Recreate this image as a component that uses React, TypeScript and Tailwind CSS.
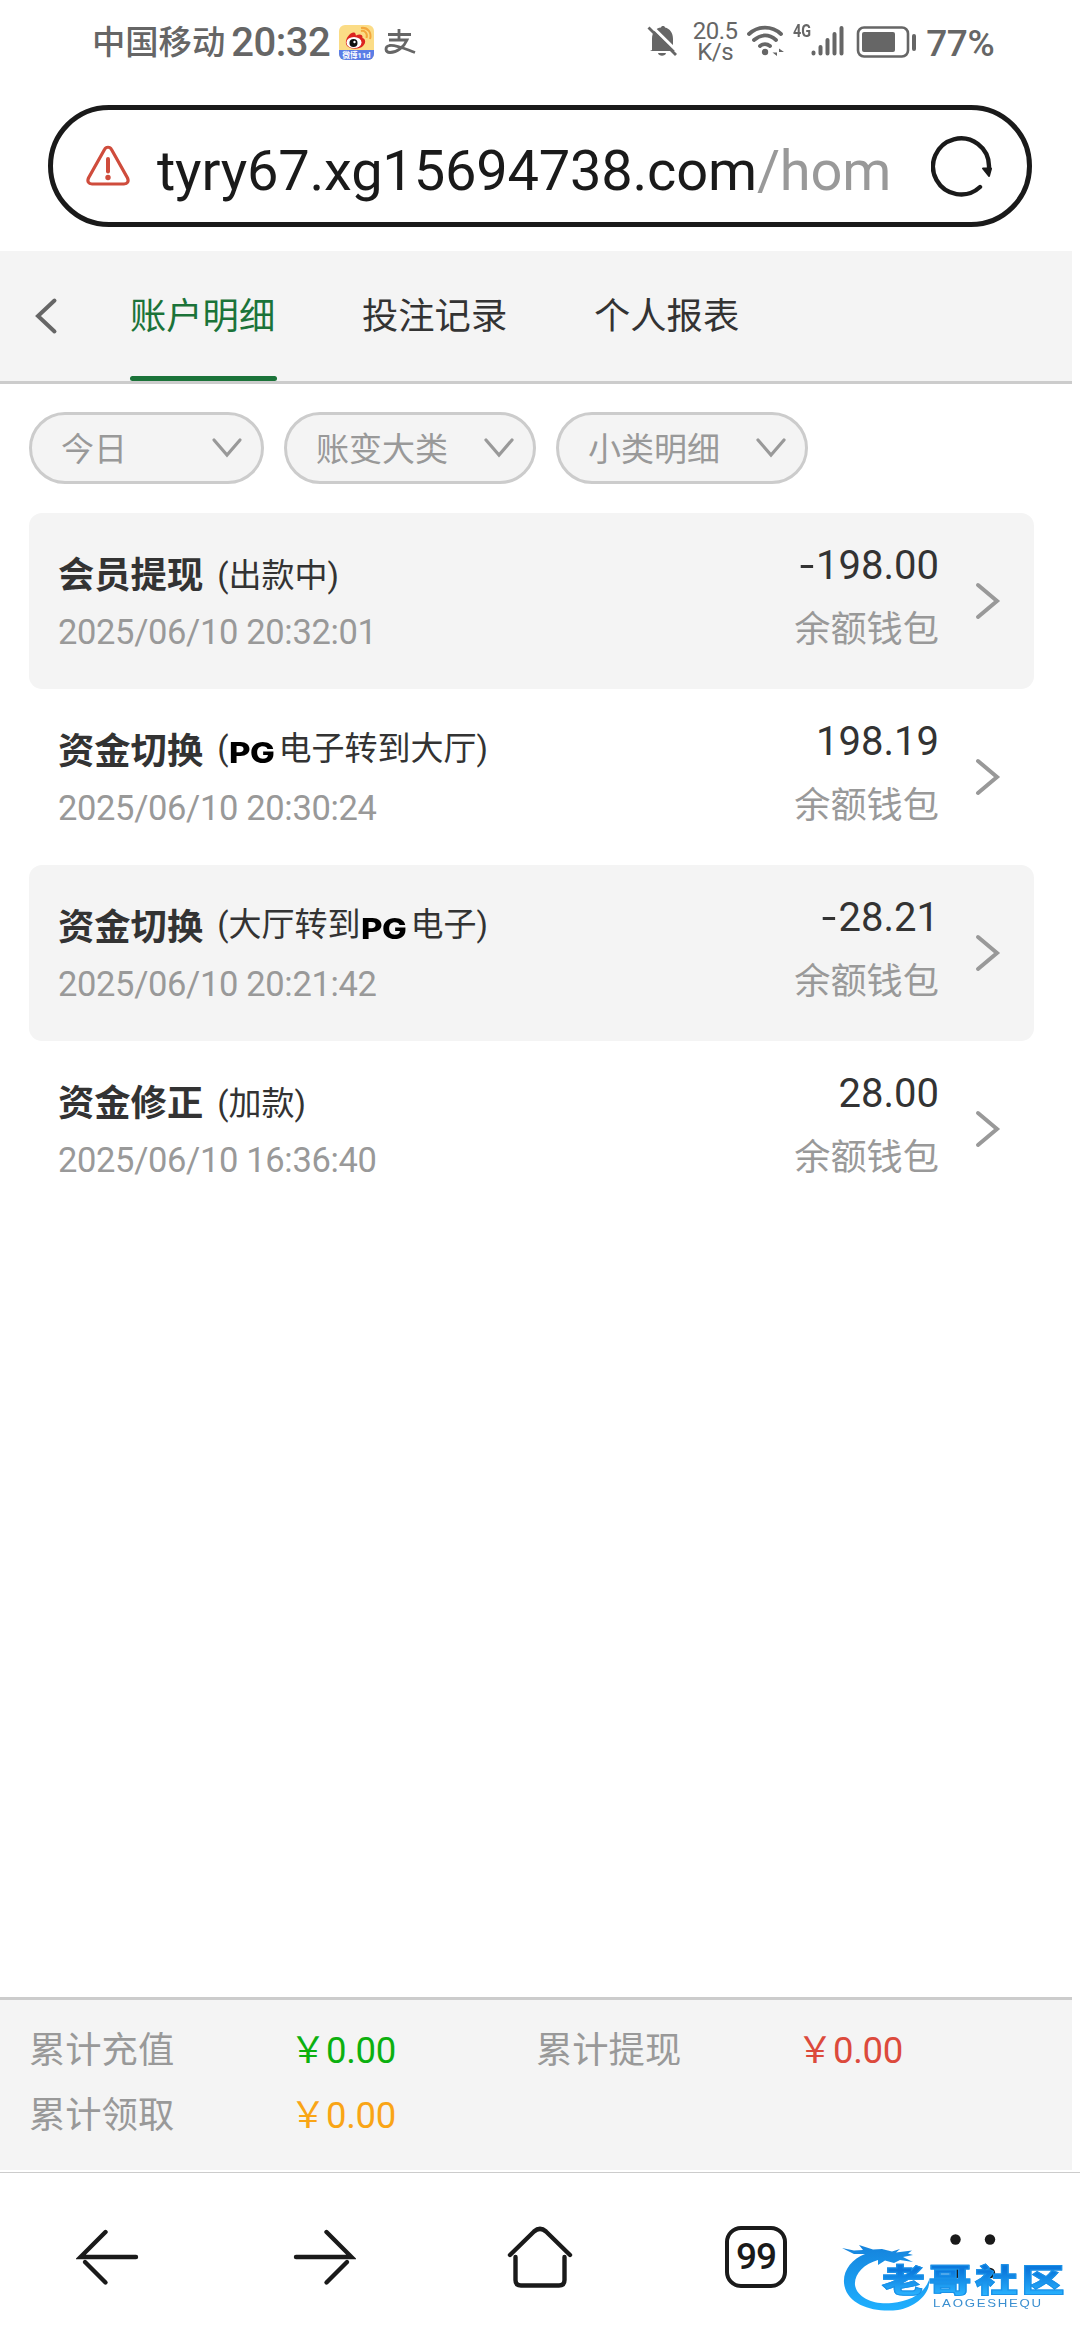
import type { ReactNode } from "react";

interface RecordItem {
  title: string;
  note: ReactNode;
  time: string;
  amount: string;
  // rows with the inline logo sit slightly higher
  raised?: boolean;
}

const TABS = ["账户明细", "投注记录", "个人报表"];

const RECORDS: RecordItem[] = [
  { title: "会员提现", note: "出款中", time: "2025/06/10 20:32:01", amount: "-198.00" },
  {
    title: "资金切换",
    note: (
      <>
        <PgMark />
        电子转到大厅
      </>
    ),
    time: "2025/06/10 20:30:24",
    amount: "198.19",
    raised: true,
  },
  {
    title: "资金切换",
    note: (
      <>
        大厅转到
        <PgMark />
        电子
      </>
    ),
    time: "2025/06/10 20:21:42",
    amount: "-28.21",
    raised: true,
  },
  { title: "资金修正", note: "加款", time: "2025/06/10 16:36:40", amount: "28.00" },
];

function PgMark() {
  return (
    <span className="inline-block w-[50px] h-[33px] pl-px leading-[33px] align-middle">
      <span className="inline-block origin-left scale-x-[1.180] font-['Inter'] font-extrabold text-[28px] tracking-[-0.500px] text-black">
        PG
      </span>
    </span>
  );
}

function StatusBar() {
  return (
    <div className="h-[84px] flex items-center pl-[92px] text-[#666]">
      <span className="mt-[2px] text-[33.300px] leading-[40px] font-medium">中国移动</span>
      <span className="ml-[6px] mt-[2px] w-[108px] text-[40px] leading-[40px] font-medium tracking-[-0.500px] whitespace-nowrap">
        20:32
      </span>
      <WeiboIcon />
      <svg className="ml-[10px]" width="32" height="28" viewBox="0 0 32 28" fill="none" stroke="#666" strokeWidth="2.8">
        <path d="M4 6.5H27M15 1V12M5 12H23C20 19 13 24.5 6 24.5C1 24.5 0.5 18.5 5.5 17.5C12 16.500 20 20.500 31 24.500" />
      </svg>

      <svg className="ml-[231px] -mt-[3px]" width="32" height="34" viewBox="0 0 32 34">
        <path d="M5 26V15C5 8 9 4 14 3.500C14 1.500 18 1.500 18 3.500C23 4.500 26 9 26 15V22L29 27H3Z" fill="#666" />
        <path d="M11 29H19C18.500 32.500 11.500 32.500 11 29Z" fill="#666" />
        <path d="M3.500 1L32 29" stroke="#fff" strokeWidth="3" />
        <path d="M1.500 3.500L29 31" stroke="#666" strokeWidth="2.800" />
      </svg>
      <div className="ml-[11px] w-[50px] text-center text-[24px] leading-[21px] tracking-[-0.500px]">
        20.5
        <br />
        K/s
      </div>
      <svg className="ml-[7px] -mt-[3px]" width="38" height="32" viewBox="0 0 38 32" fill="none" stroke="#666" strokeWidth="3.800" strokeLinecap="round">
        <path d="M2 9C11 0.500 25 0.500 34 9" />
        <path d="M7 15C14 9 22 9 29 15" />
        <path d="M13 21C16 18.500 20 18.500 23 21" />
        <circle cx="18" cy="27" r="3.200" fill="#666" stroke="none" />
        <path d="M30 23.500V31L25.500 27.500H30ZM32 31V23.500L37 27H32Z" fill="#666" stroke="none" />
      </svg>
      <span className="ml-[8px] mb-[22px] w-[18px] text-[18px] leading-[18px] font-bold origin-left scale-x-[0.800]">
        4G
      </span>
      <svg className="-mt-[3px]" width="33" height="31" viewBox="0 0 33 31" stroke="#666" strokeWidth="4" strokeLinecap="round">
        <path d="M2.500 27.500V28.500M9.500 22V28.500M16.500 15V28.500M23.500 9V28.500M30.500 3V28.500" />
      </svg>
      <svg className="ml-[12px]" width="62" height="34" viewBox="0 0 62 34">
        <rect x="2" y="2.500" width="50" height="29" rx="6" fill="none" stroke="#666" strokeWidth="2.600" />
        <rect x="6" y="7" width="33" height="20" rx="2" fill="#666" />
        <rect x="56" y="9" width="4" height="17" rx="2" fill="#666" />
      </svg>
      <span className="ml-[8px] mt-[3px] text-[37px] leading-[40px] font-medium tracking-[-0.400px]">77%</span>
    </div>
  );
}

function WeiboIcon() {
  return (
    <svg width="35" height="35" viewBox="0 0 35 35">
      <defs>
        <clipPath id="weibo">
          <rect width="35" height="35" rx="6" />
        </clipPath>
      </defs>
      <g clipPath="url(#weibo)">
        <rect width="35" height="35" fill="#fbdc86" />
        <rect y="25" width="35" height="10" fill="#5b7de6" />
        <path d="M22 6C26 5 29 9 27.500 13M22 3C29 2 33 8 31 14" fill="none" stroke="#f3a73c" strokeWidth="2" />
        <path d="M7 16C8 11 13 6 16 8C17 9 16.500 10 17 10.500C20 9 24 9 23.500 13C27 14 27 18 24 21C19 26 5 24 7 16Z" fill="#dc2420" />
        <ellipse cx="15" cy="17.500" rx="7.500" ry="5.500" fill="#fff" />
        <circle cx="14.500" cy="18" r="4" fill="#111" />
        <circle cx="15.500" cy="17" r="1.200" fill="#fff" />
      </g>
      <text x="17.500" y="33" textAnchor="middle" fontSize="7.500" fontWeight="700" fill="#fff">
        微博11d
      </text>
    </svg>
  );
}

function AddressBar() {
  return (
    <div className="ml-[48px] mt-[21px] w-[984px] h-[122px] flex items-center border-[5px] border-[#1a1a1a] rounded-full">
      <svg className="ml-[33px]" width="44" height="42" viewBox="0 0 44 42" fill="none" stroke="#cf4c3c" strokeWidth="3.200">
        <path d="M18.500 4.500C20 1.500 24 1.500 25.500 4.500L41.500 33C43 36.500 41.500 39 38 39H6C2.500 39 1 36.500 2.500 33Z" />
        <path d="M22 14V26.500" strokeWidth="4" strokeLinecap="round" />
        <circle cx="22" cy="32.500" r="2.700" fill="#cf4c3c" stroke="none" />
      </svg>
      <div className="ml-[27px] mt-[10px] w-[740px] text-[56px] leading-[70px] tracking-[-0.200px] whitespace-nowrap text-[#1a1a1a]">
        tyry67.xg15694738.com<span className="text-[#999]">/hom</span>
      </div>
      <svg className="ml-[34px]" width="62" height="62" viewBox="0 0 62 62" fill="none" stroke="#1a1a1a" strokeWidth="4.400" strokeLinecap="round">
        <path d="M49 52A28 28 0 1 1 58 31V35" />
        <path d="M52 33.500L60 33.500L58 41Z" fill="#1a1a1a" strokeWidth="2" strokeLinejoin="round" />
      </svg>
    </div>
  );
}

function TabBar() {
  return (
    <div className="mt-[24px] w-[1072px] h-[133px] flex bg-[#f4f4f4] border-b-[3px] border-[#ccc]">
      <svg className="ml-[34px] mt-[46px]" width="25" height="38" viewBox="0 0 25 38" fill="none" stroke="#666" strokeWidth="4" strokeLinecap="round">
        <path d="M20.500 3.500L4 19L20.500 34.500" />
      </svg>
      <div className="ml-[71px] flex gap-[85px]">
        {TABS.map((tab, i) => (
          <div key={tab} className="w-[147px] h-[130px] flex flex-col justify-between">
            <div className={`h-[125px] leading-[132px] text-[36.300px] ${i === 0 ? "text-[#1b7339]" : "text-[#333]"}`}>
              {tab}
            </div>
            {i === 0 && <div className="h-[5px] rounded-full bg-[#1b7339]" />}
          </div>
        ))}
      </div>
    </div>
  );
}

function Filter({ label, short }: { label: string; short?: boolean }) {
  return (
    <div
      className={`${short ? "w-[235px]" : "w-[252px]"} h-[72px] flex items-center justify-between pl-[29px] pr-[18px] rounded-full border-[3px] border-[#ccc] bg-[#f4f4f4] text-[33px] text-[#999]`}
    >
      <span className="mt-[3px] leading-[40px]">{label}</span>
      <svg width="32" height="22" viewBox="0 0 32 22" fill="none" stroke="#999" strokeWidth="3.200" strokeLinecap="round">
        <path d="M3 3L16 18L29 3" />
      </svg>
    </div>
  );
}

function RecordRow({ item, shaded }: { item: RecordItem; shaded: boolean }) {
  return (
    <div className={`w-[1005px] h-[176px] flex rounded-[13px] pl-[29px] ${shaded ? "bg-[#f4f4f4]" : ""}`}>
      <div className="flex-1">
        <div className="mt-[39px] h-[48px] flex items-center text-[#333]">
          <span className="text-[36.300px] leading-[48px] font-bold">{item.title}</span>
          <span
            className={`${item.raised ? "mb-[6px]" : "mb-0"} ml-[14px] text-[33px] leading-[48px] whitespace-nowrap`}
          >
            ({item.note})
          </span>
        </div>
        <div className="mt-[10px] text-[34.500px] leading-[44px] tracking-[-0.350px] text-[#999]">{item.time}</div>
      </div>
      <div className="text-right">
        <div className="mt-[31px] text-[40px] leading-[44px] text-[#333]">
          {item.amount.startsWith("-") && (
            <span className="inline-block origin-right scale-x-[1.300] mr-[2px]">-</span>
          )}
          {item.amount.replace("-", "")}
        </div>
        <div className="mt-[20px] text-[36.200px] leading-[44px] text-[#999]">余额钱包</div>
      </div>
      <svg className="ml-[35px] mr-[32px] mt-[68px]" width="28" height="40" viewBox="0 0 28 40" fill="none" stroke="#999" strokeWidth="4" strokeLinecap="round">
        <path d="M4 4L23 20L4 36" />
      </svg>
    </div>
  );
}

function Total({ label, color }: { label: string; color: string }) {
  return (
    <div className="w-[507px] h-[65px] flex items-center leading-[48px]">
      <span className="mt-[2px] w-[261px] text-[36.300px] text-[#999]">{label}</span>
      <span className={`flex items-center text-[36.500px] ${color}`}>
        <span className="mb-[5px] font-['Noto_Sans_CJK_SC'] text-[36px] leading-[48px]">￥</span>
        <span className="mt-[2px] tracking-[-0.300px]">0.00</span>
      </span>
    </div>
  );
}

function BrowserNav() {
  return (
    <div className="mt-[2px] h-[168px] border-t border-[#ccc] flex items-center">
      <svg className="ml-[76px]" width="64" height="60" viewBox="0 0 64 60" fill="none" stroke="#1a1a1a" strokeWidth="4.400" strokeLinecap="round">
        <path d="M60 30H4.500L29.500 5" />
        <path d="M9 35L29.500 55.500" />
      </svg>
      <svg className="ml-[152px]" width="64" height="60" viewBox="0 0 64 60" fill="none" stroke="#1a1a1a" strokeWidth="4.400" strokeLinecap="round">
        <path d="M4 30H59.500L34.500 5" />
        <path d="M55 35L34.500 55.500" />
      </svg>
      <svg className="ml-[150px]" width="68" height="66" viewBox="0 0 68 66" fill="none" stroke="#1a1a1a" strokeWidth="4.400" strokeLinecap="round">
        <path d="M4 31L28 7.500C32 4 36 4 40 7.500L64 31" />
        <path d="M9.500 33V56C9.500 60 11.500 61.500 15 61.500H53C56.500 61.500 58.500 60 58.500 56V33" />
      </svg>
      <div className="ml-[151px] w-[62px] h-[62px] rounded-[16px] border-[4.500px] border-[#1a1a1a] text-center text-[37px] leading-[54px] font-medium tracking-[-1px] text-[#1a1a1a]">
        99
      </div>
      <svg className="ml-[161px]" width="50" height="50" viewBox="0 0 50 50" fill="#1a1a1a">
        <circle cx="7.500" cy="7.500" r="5.200" />
        <circle cx="42" cy="7.500" r="5.200" />
        <circle cx="7.500" cy="41" r="5.200" />
        <circle cx="42" cy="41" r="5.200" />
      </svg>
    </div>
  );
}

function Watermark() {
  return (
    <div className="absolute left-[840px] top-[2242px] w-[228px] h-[76px]">
      <svg className="absolute inset-0" width="228" height="76" viewBox="0 0 228 76">
        <defs>
          <linearGradient id="swirl" x1="0" y1="0" x2="0" y2="1">
            <stop offset="0" stopColor="#1583dc" />
            <stop offset="1" stopColor="#1fb0ff" />
          </linearGradient>
        </defs>
        <path
          d="M2 6L14 8.500L23 8L19 3L33 7.500L42 7L52 9.500L60 7L56 10.500L72 8.500L68 11.500L73 13L63 15L73 20L60 18L54 21L45 18.500L38 23L38 18C24 22 14 32 15 43C17 56 34 63 52 61C70 59 84 52 89 38C91 51 76 65 58 68C34 71 6 63 4 41C3 28 12 17 25 12L14 12Z"
          fill="url(#swirl)"
        />
      </svg>
      <div className="absolute left-[42px] top-[18px] origin-left scale-x-[1.340] bg-gradient-to-b from-[#0b78dc] from-25% to-[#2bb4ff] to-85% bg-clip-text text-transparent [-webkit-text-stroke:1px_#1a92e8] text-[32px] leading-[42px] font-black tracking-[2.700px] whitespace-nowrap">
        老哥社区
      </div>
      <div className="absolute left-[93px] top-[54px] origin-left scale-x-[1.150] font-['Liberation_Sans'] text-[11.500px] leading-[14px] tracking-[1.500px] text-[#3b8fd0]">
        LAOGESHEQU
      </div>
    </div>
  );
}

export default function App() {
  return (
    <div className="relative w-[1080px] h-[2340px] overflow-hidden bg-white font-['Roboto','Noto_Sans_CJK_SC',sans-serif]">
      <StatusBar />
      <AddressBar />
      <TabBar />
      <div className="h-[1613px] pl-[29px] pt-[28px]">
        <div className="flex gap-[20px] mb-[29px]">
          <Filter label="今日" short />
          <Filter label="账变大类" />
          <Filter label="小类明细" />
        </div>
        {RECORDS.map((item, i) => (
          <RecordRow key={item.time} item={item} shaded={i % 2 === 0} />
        ))}
      </div>
      <div className="w-[1072px] h-[173px] flex flex-wrap content-start pl-[29px] pt-[17px] border-t-[3px] border-[#ccc] bg-[#f4f4f4]">
        <Total label="累计充值" color="text-[#0cb00f]" />
        <Total label="累计提现" color="text-[#dc4a3c]" />
        <Total label="累计领取" color="text-[#f9a516]" />
      </div>
      <BrowserNav />
      <Watermark />
    </div>
  );
}
